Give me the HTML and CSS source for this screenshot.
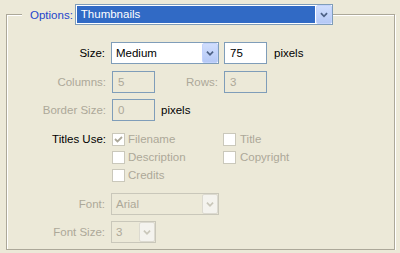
FILE: index.html
```html
<!DOCTYPE html>
<html lang="en">
<head>
    <meta charset="UTF-8">
    <meta name="viewport" content="width=device-width, initial-scale=1.0">
    <title>Options</title>
    <link rel="stylesheet" href="styles.css">
</head>
<body>
    <fieldset class="group">
        <legend class="group-title">
            <span class="caption">Options:</span>
            <span class="combo combo-options">
                <span class="combo-value is-selected">Thumbnails</span>
                <span class="combo-btn">
                    <svg viewBox="0 0 16 19"><polyline points="4.5,8 8,11.5 11.5,8"/></svg>
                </span>
            </span>
        </legend>

        <div class="row row-size">
            <span class="label">Size:</span>
            <span class="combo combo-size">
                <span class="combo-value">Medium</span>
                <span class="combo-btn">
                    <svg viewBox="0 0 16 20"><polyline points="4.5,8.5 8,12 11.5,8.5"/></svg>
                </span>
            </span>
            <span class="field field-num">75</span>
            <span class="unit">pixels</span>
        </div>

        <div class="row row-grid">
            <span class="label label-wide is-disabled">Columns:</span>
            <span class="field is-disabled">5</span>
            <span class="label label-rows is-disabled">Rows:</span>
            <span class="field is-disabled">3</span>
        </div>

        <div class="row row-border">
            <span class="label label-wide is-disabled">Border Size:</span>
            <span class="field is-disabled">0</span>
            <span class="unit unit-near">pixels</span>
        </div>

        <div class="row row-titles">
            <span class="label label-wide">Titles Use:</span>
            <div class="checks">
                <label class="check">
                    <span class="check-box">
                        <svg viewBox="0 0 11 11"><polyline points="2,5 4.5,7.5 9,3"/></svg>
                    </span>Filename
                </label>
                <label class="check check-right"><span class="check-box"></span>Title</label>
                <label class="check"><span class="check-box"></span>Description</label>
                <label class="check check-right"><span class="check-box"></span>Copyright</label>
                <label class="check"><span class="check-box"></span>Credits</label>
            </div>
        </div>

        <div class="row row-font">
            <span class="label is-disabled">Font:</span>
            <span class="combo combo-font is-disabled">
                <span class="combo-value">Arial</span>
                <span class="combo-btn">
                    <svg viewBox="0 0 16 20"><polyline points="4.5,8.5 8,12 11.5,8.5"/></svg>
                </span>
            </span>
        </div>

        <div class="row row-fontsize">
            <span class="label is-disabled">Font Size:</span>
            <span class="combo combo-fontsize is-disabled">
                <span class="combo-value">3</span>
                <span class="combo-btn">
                    <svg viewBox="0 0 16 20"><polyline points="4.5,8.5 8,12 11.5,8.5"/></svg>
                </span>
            </span>
        </div>
    </fieldset>
</body>
</html>
```

FILE: styles.css
```css
* {
    box-sizing: border-box;
}
body {
    margin: 0;
    padding: 4px 0 0 6px;
    background: #ece9d8;
    color: #000;
    font-family: "Liberation Sans", Arial, sans-serif;
    font-size: 11.5px;
}

/* group box */
fieldset.group {
    width: 389px;
    margin: 0;
    padding: 0 0 6px;
    border: 1px solid #aca899;
    box-shadow: inset 1px 1px 0 #fff, 1px 1px 0 #fff;
}
legend.group-title {
    display: flex;
    align-items: center;
    margin-left: 15px;
    padding: 0;
    background: #ece9d8;
}
span.caption {
    padding: 0 2px 0 8px;
    color: #2446cc;
}

/* rows */
div.row {
    display: flex;
    align-items: center;
    height: 22px;
}
div.row-size {
    margin-top: 17px;
}
div.row-grid {
    margin-top: 7px;
}
div.row-border {
    margin-top: 6px;
}
div.row-titles {
    height: auto;
    align-items: flex-start;
    margin-top: 9px;
}
div.row-font {
    margin-top: 9px;
}
div.row-fontsize {
    margin-top: 6px;
}
span.label {
    width: 98px;
    margin-right: 6px;
    text-align: right;
    white-space: nowrap;
}
span.label-wide {
    width: 99px;
}
span.label-rows {
    width: 63px;
}
div.row-titles span.label {
    line-height: 18px;
}
.is-disabled {
    color: #aca899;
}
span.unit {
    margin-left: 7px;
}
span.unit-near {
    margin-left: 6px;
}

/* combo boxes */
span.combo {
    display: flex;
    height: 22px;
    border: 1px solid #7f9db9;
    background: #fff;
}
span.combo-options {
    width: 258px;
    height: 21px;
}
span.combo-size,
span.combo-font {
    width: 108px;
}
span.combo-fontsize {
    width: 45px;
}
span.combo-value {
    flex: 1;
    margin: 1px;
    padding-left: 3px;
    line-height: 18px;
    white-space: nowrap;
    overflow: hidden;
}
span.combo-options span.combo-value {
    line-height: 17px;
}
span.combo-value.is-selected {
    padding-left: 4px;
    background: #316ac5;
    color: #fff;
}
span.combo-btn {
    width: 16px;
    border: 1px solid #c3d3fd;
    border-radius: 2px;
    background: linear-gradient(#d0defd, #b5c9f6);
}
span.combo-btn svg {
    display: block;
    width: 100%;
    height: 100%;
    fill: none;
    stroke: #4d6185;
    stroke-width: 2;
}
span.combo.is-disabled {
    border-color: #c9c7ba;
    background: #ece9d8;
}
span.combo.is-disabled span.combo-btn {
    border-color: #dcdad0;
    background: #f4f3ee;
}
span.combo.is-disabled span.combo-btn svg {
    stroke: #c9c7ba;
}

/* text fields */
span.field {
    width: 43px;
    height: 22px;
    padding-left: 5px;
    border: 1px solid #7f9db9;
    background: #fff;
    line-height: 20px;
}
span.field-num {
    margin-left: 5px;
}
span.field.is-disabled {
    background: #ece9d8;
}

/* check boxes */
div.checks {
    display: grid;
    grid-template-columns: 111px auto;
    grid-auto-rows: 18px;
}
label.check {
    display: flex;
    align-items: center;
    gap: 3px;
    color: #aca899;
    white-space: nowrap;
}
label.check-right {
    gap: 4px;
}
span.check-box {
    width: 13px;
    height: 13px;
    border: 1px solid #cac8bb;
    background: #fff;
}
span.check-box svg {
    display: block;
    width: 11px;
    height: 11px;
    fill: none;
    stroke: #aca899;
    stroke-width: 1.8;
}
```
